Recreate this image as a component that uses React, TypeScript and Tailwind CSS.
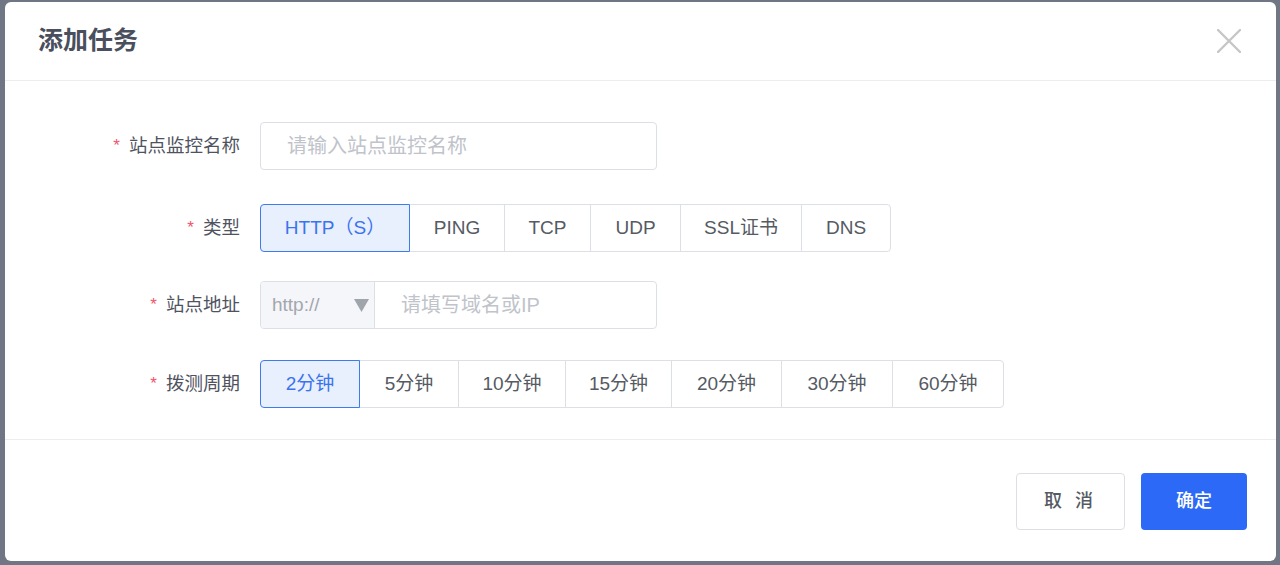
import { useState } from 'react';

const types = [
  { label: 'HTTP（S）', w: 'w-[150px]' },
  { label: 'PING', w: 'w-[96px]' },
  { label: 'TCP', w: 'w-[87px]' },
  { label: 'UDP', w: 'w-[91px]' },
  { label: 'SSL证书', w: 'w-[122px]' },
  { label: 'DNS', w: 'w-[90px]' },
];

const periods = [
  { label: '2分钟', w: 'w-[100px]' },
  { label: '5分钟', w: 'w-[100px]' },
  { label: '10分钟', w: 'w-[108px]' },
  { label: '15分钟', w: 'w-[107px]' },
  { label: '20分钟', w: 'w-[111px]' },
  { label: '30分钟', w: 'w-[112px]' },
  { label: '60分钟', w: 'w-[112px]' },
];

function Label({ text }: { text: string }) {
  return (
    <div className="w-[235px] mr-[20px] shrink-0 flex items-center justify-end text-[18.5px] text-[#4f5361]">
      <span className="text-[#f0546c] mr-[9px] text-[17px]">*</span>
      {text}
    </div>
  );
}

function Segmented({ items, active, onChange }: { items: { label: string; w: string }[]; active: number; onChange: (i: number) => void }) {
  return (
    <div className="flex h-[48px]">
      {items.map((it, i) => {
        const first = i === 0;
        const last = i === items.length - 1;
        const on = i === active;
        return (
          <button
            key={it.label}
            onClick={() => onChange(i)}
            className={`${it.w} h-full flex items-center justify-center text-[19px] border ${first ? 'rounded-l-[4px]' : '-ml-px'} ${last ? 'rounded-r-[4px]' : ''} ${on ? 'relative z-10 bg-[#e8effd] border-[#3d7bf2] text-[#3b73ee]' : 'bg-white border-[#dcdfe6] text-[#555a63]'}`}
          >
            {it.label}
          </button>
        );
      })}
    </div>
  );
}

export default function App() {
  const [type, setType] = useState(0);
  const [period, setPeriod] = useState(0);

  return (
    <div className="w-full h-[565px] bg-[#717684] pt-[2px] pl-[5px] pr-[4px] font-['Liberation_Sans','Noto_Sans_CJK_SC',sans-serif]">
      <div className="h-[559px] bg-white rounded-[6px] flex flex-col">
        <div className="h-[79px] flex items-center justify-between pl-[33px] pr-[35px] border-b border-[#ebedf0]">
          <h1 className="text-[25px] font-semibold text-[#4a4f5d]">添加任务</h1>
          <button className="w-[24px] h-[24px] flex items-center justify-center">
            <svg width="24" height="24" viewBox="0 0 24 24" fill="none" stroke="#c6c6c6" strokeWidth="2.4" strokeLinecap="round">
              <path d="M1 1 L23 23 M23 1 L1 23" />
            </svg>
          </button>
        </div>

        <div className="pt-[41px] pb-[31px] border-b border-[#ebedf0]">
          <div className="flex h-[48px]">
            <Label text="站点监控名称" />
            <input
              placeholder="请输入站点监控名称"
              className="w-[397px] h-full border border-[#dcdfe6] rounded-[4px] px-[26px] text-[20px] text-[#555] placeholder:text-[#c0c3ca] outline-none"
            />
          </div>

          <div className="flex mt-[34px]">
            <Label text="类型" />
            <Segmented items={types} active={type} onChange={setType} />
          </div>

          <div className="flex h-[48px] mt-[29px]">
            <Label text="站点地址" />
            <div className="w-[397px] h-full flex border border-[#dcdfe6] rounded-[4px] overflow-hidden">
              <div className="w-[114px] shrink-0 bg-[#f5f6f9] border-r border-[#dcdfe6] flex items-center justify-between pl-[11px] pr-[5px] text-[19px] text-[#a3a7ae]">
                <span>http://</span>
                <svg width="15" height="13" viewBox="0 0 15 13">
                  <path d="M0 0 H15 L7.5 13 Z" fill="#a0a4ab" />
                </svg>
              </div>
              <input
                placeholder="请填写域名或IP"
                className="flex-1 min-w-0 px-[26px] text-[20px] text-[#555] placeholder:text-[#c0c3ca] outline-none"
              />
            </div>
          </div>

          <div className="flex mt-[31px]">
            <Label text="拨测周期" />
            <Segmented items={periods} active={period} onChange={setPeriod} />
          </div>
        </div>

        <div className="flex justify-end gap-[16px] pt-[33px] pr-[29px]">
          <button className="w-[109px] h-[57px] border border-[#dcdfe6] rounded-[4px] bg-white text-[18px] font-medium text-[#555a63] tracking-[4px]">
            取 消
          </button>
          <button className="w-[106px] h-[57px] rounded-[4px] bg-[#2b69f6] text-[18px] font-medium text-white">
            确定
          </button>
        </div>
      </div>
    </div>
  );
}
